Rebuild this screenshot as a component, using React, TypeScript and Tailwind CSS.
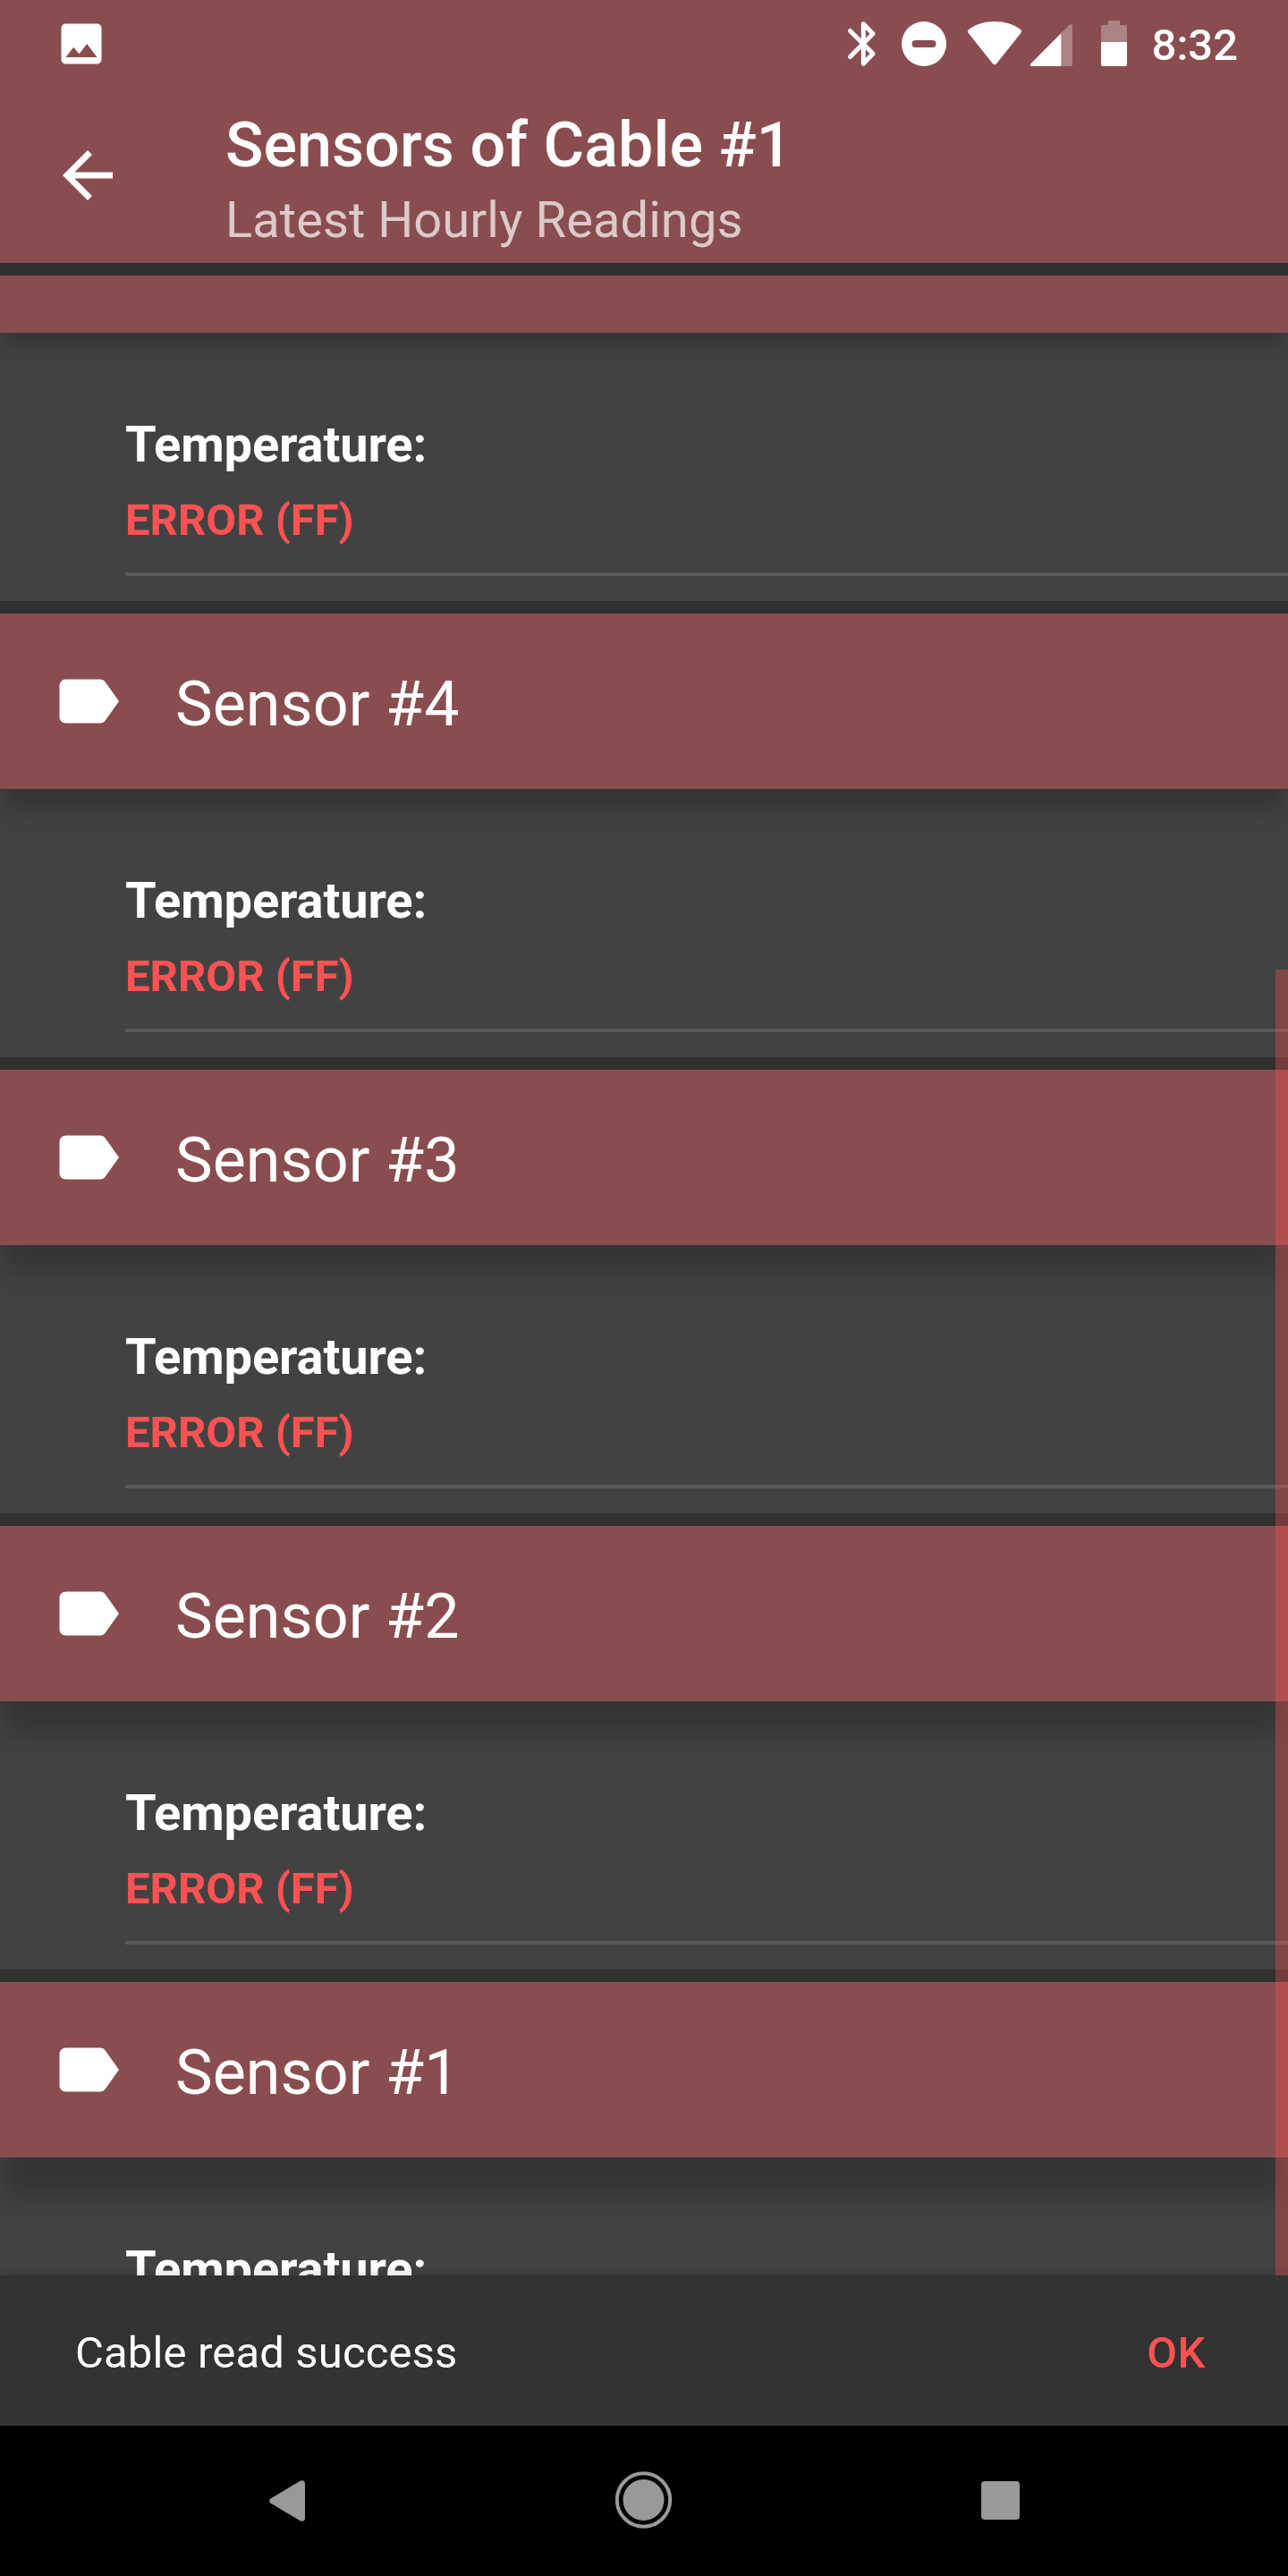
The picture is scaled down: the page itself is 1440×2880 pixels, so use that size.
const sensors = [
  { name: 'Sensor #4', shadow: 'shadow-[0_24px_26px_-3px_rgba(0,0,0,0.22)]' },
  { name: 'Sensor #3', shadow: 'shadow-[0_34px_26px_-3px_rgba(0,0,0,0.2)]' },
  { name: 'Sensor #2', shadow: 'shadow-[0_41px_26px_-3px_rgba(0,0,0,0.2)]' },
  { name: 'Sensor #1', shadow: 'shadow-[0_48px_26px_-3px_rgba(0,0,0,0.2)]', partial: true },
];

function LabelIcon() {
  return (
    <svg className="size-[84px] shrink-0" viewBox="0 0 24 24" fill="white">
      <path d="M17.63 5.84C17.27 5.33 16.67 5 16 5L5 5.01C3.9 5.01 3 5.9 3 7v10c0 1.1.9 1.99 2 1.99L16 19c.67 0 1.27-.33 1.63-.84L22 12l-4.37-6.16z" />
    </svg>
  );
}

function Reading({ partial = false }: { partial?: boolean }) {
  return (
    <div className="h-[300px] pt-[92px] pl-[140px]">
      <div className="h-[66px] text-[56px] leading-[66px] font-bold tracking-[-0.12px] text-white">Temperature:</div>
      {!partial && (
        <>
          <div className="mt-[23px] h-[58px] text-[49px] leading-[58px] font-bold text-[#ff5252]">ERROR (FF)</div>
          <div className="mt-[29px] h-1 bg-[#595959]" />
        </>
      )}
    </div>
  );
}

function StatusBar() {
  return (
    <div className="flex h-[84px] items-start">
      <svg className="mt-[19px] ml-[61px] size-[60px]" viewBox="0 0 24 24" fill="white">
        <path d="M21 19V5c0-1.1-.9-2-2-2H5c-1.1 0-2 .9-2 2v14c0 1.1.9 2 2 2h14c1.1 0 2-.9 2-2zM8.500 13.500l2.500 3.010L14.500 12l4.500 6H5l3.500-4.500z" />
      </svg>
      <div className="ml-auto flex items-start pr-[56px]">
        <svg className="mt-[23px] h-[52px] w-[34px]" viewBox="0 0 34 52" fill="none" stroke="white" strokeWidth="5" strokeLinecap="round" strokeLinejoin="round">
          <path d="M4.500 11.500L30 37 19.300 48.300V3.700L30 14.700 4.500 40.400" />
        </svg>
        <svg className="mt-[24px] ml-[28px] size-[50px]" viewBox="0 0 50 50">
          <circle cx="25" cy="25" r="25" fill="white" />
          <rect x="11.500" y="21" width="27" height="8" rx="4" fill="#8a4d4f" />
        </svg>
        <svg className="mt-[24px] ml-[24px] h-[50px] w-[60px]" viewBox="0 0 60 50" fill="white">
          <path d="M1 9C9 3 19 0 30 0s21 3 29 9q1.800 1.600.5 3.700L32 47.300q-2 2-4 0L.5 12.700Q-.8 10.600 1 9z" />
        </svg>
        <svg className="mt-[26px] ml-[9px] h-[48px] w-[49px]" viewBox="0 0 49 48">
          <path d="M1.400 45.200L45 1.600Q48 0 48 3v43q0 2-2 2H2.500Q0 47.500 1.400 45.200z" fill="white" fillOpacity=".3" />
          <path d="M1.400 45.200L35.300 11.300V48H2.500Q0 47.500 1.400 45.200z" fill="white" />
        </svg>
        <svg className="mt-[23px] ml-[31px] h-[51px] w-[29px]" viewBox="0 0 29 51" fill="white">
          <path d="M8 0h13v5h6q2 0 2 2v17H0V7q0-2 2-2h6z" fillOpacity=".3" />
          <path d="M0 24h29v25q0 2-2 2H2q-2 0-2-2z" />
        </svg>
        <div className="mt-[22px] ml-[28px] h-[58px] text-[49px] leading-[58px] font-medium text-white">8:32</div>
      </div>
    </div>
  );
}

export default function App() {
  return (
    <div className="flex h-[2880px] w-[1440px] flex-col overflow-hidden bg-[#303030] font-['Roboto',sans-serif]">
      <header className="h-[294px] shrink-0 bg-[#8a4d4f]">
        <StatusBar />
        <div className="flex h-[210px] items-start pl-[56px]">
          <svg className="mt-[70px] size-[84px]" viewBox="0 0 24 24" fill="white">
            <path d="M20 11H7.830l5.590-5.590L12 4l-8 8 8 8 1.410-1.410L7.830 13H20v-2z" />
          </svg>
          <div className="mt-[37px] ml-[112px]">
            <h1 className="h-[82px] text-[70px] leading-[82px] font-medium tracking-[0.08px] text-white">Sensors of Cable #1</h1>
            <p className="mt-[10px] h-[66px] text-[56px] leading-[66px] tracking-[0.08px] text-white/70">Latest Hourly Readings</p>
          </div>
        </div>
      </header>

      <main className="relative mt-[14px] h-[2236px] shrink-0 overflow-hidden">
        <section className="mb-[14px] bg-[#424242]">
          <div className="h-16 bg-[#8a4d4f] shadow-[0_15px_26px_-3px_rgba(0,0,0,0.24)]" />
          <Reading />
        </section>
        {sensors.map((s) => (
          <section key={s.name} className="mb-[14px] bg-[#424242]">
            <div className={`flex h-[196px] items-center bg-[#8a4d4f] pl-[56px] ${s.shadow}`}>
              <LabelIcon />
              <div className="mt-[6px] ml-[56px] text-[70px] leading-[82px] tracking-[0.08px] text-white">{s.name}</div>
            </div>
            <Reading partial={s.partial} />
          </section>
        ))}
        <div className="absolute top-[776px] right-0 bottom-0 w-[14px] bg-[#ff5252]/33" />
      </main>

      <div className="z-10 flex h-[168px] shrink-0 items-center justify-between bg-[#323232] pr-[92px] pl-[84px] text-[49px] leading-[58px] shadow-[0_0_12px_rgba(0,0,0,0.2)]">
        <span className="mt-[5px] tracking-[0.15px] text-white">Cable read success</span>
        <button className="mt-[5px] font-medium tracking-[0.5px] text-[#ff5252]">OK</button>
      </div>

      <nav className="flex h-[168px] shrink-0 items-start bg-black">
        <svg className="mt-[61px] ml-[301px] h-[46px] w-[40px]" viewBox="0 0 40 46" fill="#999">
          <path d="M1.500 20.500L34.500.8Q40-1 40 4v38q0 5-5.500 3.200L1.500 25.500Q-1.300 23 1.500 20.500z" />
        </svg>
        <svg className="mt-[51px] ml-[347px] size-[64px]" viewBox="0 0 64 64">
          <circle cx="31.500" cy="32" r="29.700" fill="none" stroke="#999" strokeWidth="4" />
          <circle cx="31.500" cy="32" r="23" fill="#999" />
        </svg>
        <div className="mt-[62px] ml-[345px] size-[43px] rounded-[4px] bg-[#999]" />
      </nav>
    </div>
  );
}
